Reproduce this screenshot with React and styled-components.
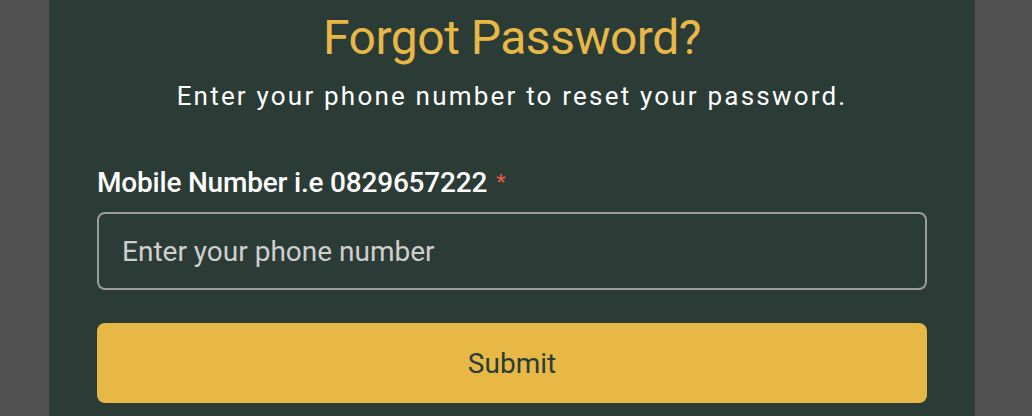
import React from "react";
import styled, { createGlobalStyle } from "styled-components";

const GlobalStyle = createGlobalStyle`
  html, body {
    margin: 0;
    padding: 0;
    background: #505050;
    font-family: Roboto, "Liberation Sans", Arial, sans-serif;
  }
`;

const Page = styled.div`
  height: 416px;
  overflow: hidden;
  background: #505050;
  padding-left: 49px;
`;

const Card = styled.div`
  width: 926px;
  min-height: 416px;
  box-sizing: border-box;
  background: #2b3b36;
  padding: 10px 48px 0;
  display: flex;
  flex-direction: column;
`;

const Title = styled.h1`
  margin: 0;
  font-size: 48px;
  line-height: 56px;
  font-weight: 400;
  letter-spacing: -0.5px;
  color: #e8b847;
  text-align: center;
`;

const Subtitle = styled.p`
  margin: 15px 0 0;
  font-size: 26px;
  line-height: 30px;
  font-weight: 400;
  letter-spacing: 2.2px;
  color: #ffffff;
  text-align: center;
`;

const Form = styled.form`
  display: flex;
  flex-direction: column;
  margin-top: 56px;
`;

const Label = styled.label`
  font-size: 28px;
  line-height: 32px;
  font-weight: 500;
  letter-spacing: -0.2px;
  color: #ffffff;
`;

const Required = styled.span`
  color: #e5564b;
  font-size: 21px;
  line-height: 0;
  margin-left: 9px;
  vertical-align: 3px;
`;

const Input = styled.input`
  margin-top: 13px;
  height: 78px;
  box-sizing: border-box;
  padding: 0 23px;
  background: transparent;
  border: 2px solid #9c9c9c;
  border-radius: 8px;
  font-family: inherit;
  font-size: 28px;
  color: #ffffff;
  outline: none;

  &::placeholder {
    color: #cfcfcf;
  }
`;

const SubmitButton = styled.button`
  margin-top: 33px;
  height: 80px;
  border: none;
  border-radius: 8px;
  background: #e8b847;
  color: #2b3b36;
  font-family: inherit;
  font-size: 28px;
  cursor: pointer;
`;

const App = () => (
  <>
    <GlobalStyle />
    <Page>
      <Card>
        <Title>Forgot Password?</Title>
        <Subtitle>Enter your phone number to reset your password.</Subtitle>
        <Form onSubmit={e => e.preventDefault()}>
          <Label htmlFor="phone">
            Mobile Number i.e 0829657222<Required>*</Required>
          </Label>
          <Input id="phone" type="tel" placeholder="Enter your phone number" />
          <SubmitButton type="submit">Submit</SubmitButton>
        </Form>
      </Card>
    </Page>
  </>
);

export default App;
